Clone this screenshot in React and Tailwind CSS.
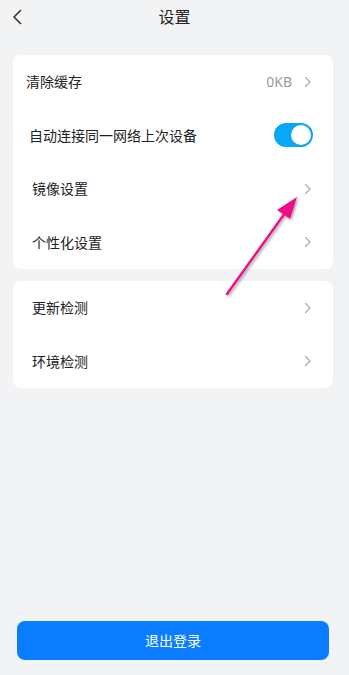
import React from "react";

const Chevron = () => (
  <svg width="8" height="12" viewBox="0 0 8 12" fill="none" className="shrink-0">
    <path d="M1.5 1.5 L6 6 L1.5 10.5" stroke="#a9adb5" strokeWidth="1.3" strokeLinecap="round" strokeLinejoin="round" />
  </svg>
);

const Row = ({ label }) => (
  <div className="flex h-[53.5px] items-center justify-between pl-[19px] pr-[21px]">
    <span className="text-[14px] text-[#222]">{label}</span>
    <Chevron />
  </div>
);

export default function App() {
  return (
    <div
      className="relative h-[675px] w-[349px] overflow-hidden bg-[#f2f3f5]"
      style={{ fontFamily: '"Noto Sans CJK SC", "Noto Sans", sans-serif' }}
    >
      {/* header */}
      <div className="relative flex h-[32px] items-center justify-center">
        <svg className="absolute left-[12px] top-[9px]" width="11" height="16" viewBox="0 0 11 16" fill="none">
          <path d="M8.5 1.5 L2 8 L8.5 14.5" stroke="#333" strokeWidth="1.6" strokeLinecap="round" strokeLinejoin="round" />
        </svg>
        <span className="text-[16px] text-[#222]">设置</span>
      </div>

      <div className="mt-[23px] flex flex-col gap-[12px] pl-[13px] pr-[16px]">
        <div className="rounded-[8px] bg-white">
          <div className="flex h-[53.5px] items-center justify-between pl-[13px] pr-[21px]">
            <span className="text-[14px] text-[#222]">清除缓存</span>
            <div className="flex items-center gap-[12px]">
              <span className="text-[14px] text-[#999]" style={{ fontFamily: '"Noto Sans", sans-serif' }}>0KB</span>
              <Chevron />
            </div>
          </div>
          <div className="flex h-[53.5px] items-center justify-between pl-[16px] pr-[20px]">
            <span className="text-[14px] text-[#222]">自动连接同一网络上次设备</span>
            <div className="flex h-[24px] w-[39px] items-center justify-end rounded-full bg-[#0aa6f7] pr-[2px]">
              <div className="h-[20px] w-[20px] rounded-full bg-white" />
            </div>
          </div>
          <Row label="镜像设置" />
          <Row label="个性化设置" />
        </div>

        <div className="rounded-[8px] bg-white">
          <Row label="更新检测" />
          <Row label="环境检测" />
        </div>
      </div>

      <div className="absolute bottom-[15px] left-[17px] right-[20px]">
        <div className="flex h-[39px] items-center justify-center rounded-[8px] bg-[#0a7cff]">
          <span className="text-[14px] text-white">退出登录</span>
        </div>
      </div>

      {/* annotation arrow */}
      <svg className="pointer-events-none absolute left-0 top-0" width="349" height="675" viewBox="0 0 349 675">
        <defs>
          <filter id="sh" x="-20%" y="-20%" width="140%" height="140%">
            <feDropShadow dx="1.5" dy="1.5" stdDeviation="1" floodColor="#000" floodOpacity="0.35" />
          </filter>
        </defs>
        <g filter="url(#sh)">
          <line x1="227" y1="294" x2="285" y2="213" stroke="#ee1188" strokeWidth="2.4" strokeLinecap="round" />
          <polygon points="297,197 277,210 290,219" fill="#ee1188" />
        </g>
      </svg>
    </div>
  );
}
